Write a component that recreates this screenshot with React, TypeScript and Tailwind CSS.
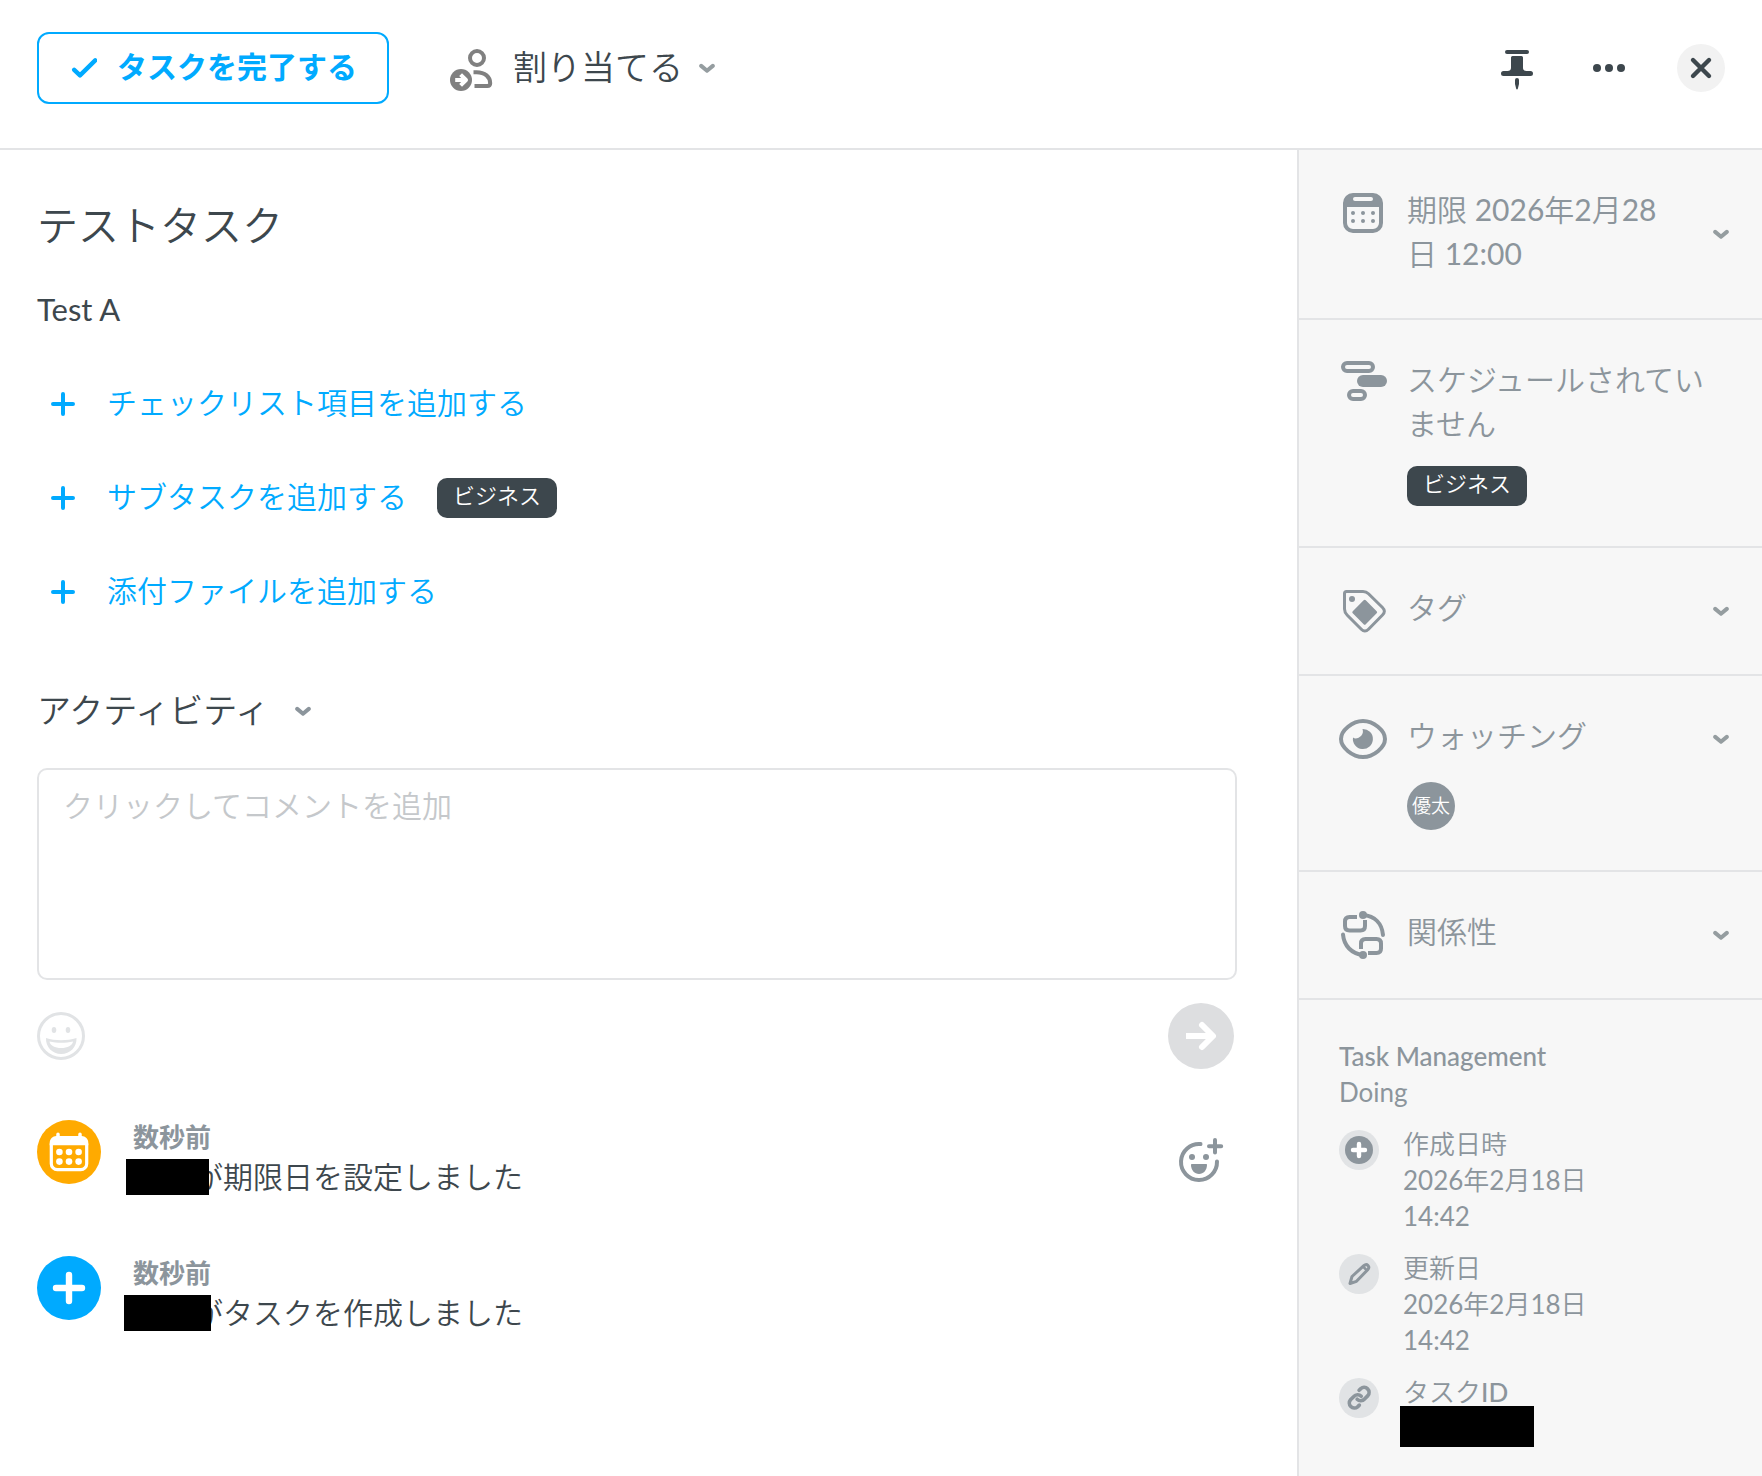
import { useState } from 'react';
import type { ReactNode } from 'react';
import clsx from 'clsx';

interface IconProps {
  className?: string;
}

const ChevronIcon = ({ className }: IconProps) => (
  <svg className={clsx('shrink-0', className)} width="16" height="16" viewBox="0 0 16 16" fill="none" aria-hidden="true">
    <path d="M2.2 5.9L8 10.7L13.8 5.9" stroke="currentColor" strokeWidth="4" strokeLinecap="round" strokeLinejoin="round" />
  </svg>
);

const CheckIcon = () => (
  <svg width="26" height="24" viewBox="0 0 26 24" fill="none" aria-hidden="true">
    <path d="M3.2 13.8L9 19.4L24.2 4.4" stroke="currentColor" strokeWidth="4.4" strokeLinecap="round" strokeLinejoin="round" />
  </svg>
);

const AssignIcon = () => (
  <svg width="48" height="48" viewBox="0 0 48 48" fill="none" aria-hidden="true">
    <circle cx="30" cy="14" r="7" stroke="#808080" strokeWidth="4" />
    <path d="M26.5 28.2H29.5C38 28.2 43.2 33 43.2 39.2C43.2 41.2 42.2 42 40.4 42H27.5" stroke="#808080" strokeWidth="4" />
    <circle cx="14" cy="36" r="11" fill="#808080" />
    <path d="M8.2 36H18M13.6 30.6L19 36L13.6 41.4" stroke="white" strokeWidth="4" strokeLinejoin="round" />
  </svg>
);

const PinIcon = () => (
  <svg width="48" height="48" viewBox="0 0 48 48" fill="currentColor" aria-hidden="true">
    <rect x="12" y="6" width="24" height="4" rx="2" />
    <path d="M19.5 12h9a1.5 1.5 0 0 1 1.5 1.5V24c0 1.8 1.4 3 3.4 3h4.1a2.5 2.5 0 0 1 0 5h-27a2.5 2.5 0 0 1 0-5h4.1c2 0 3.4-1.2 3.4-3V13.5a1.5 1.5 0 0 1 1.5-1.5z" />
    <path d="M22 36a2 2 0 0 1 4 0v4l-1.2 4.8a.83.83 0 0 1-1.6 0L22 40z" />
  </svg>
);

const DotsIcon = () => (
  <svg width="48" height="48" viewBox="0 0 48 48" fill="currentColor" aria-hidden="true">
    <circle cx="12" cy="24" r="4" />
    <circle cx="24" cy="24" r="4" />
    <circle cx="36" cy="24" r="4" />
  </svg>
);

const CloseIcon = () => (
  <svg width="48" height="48" viewBox="0 0 48 48" fill="none" aria-hidden="true">
    <path d="M16 16L32 32M32 16L16 32" stroke="currentColor" strokeWidth="4.4" strokeLinecap="round" />
  </svg>
);

const PlusIcon = () => (
  <svg width="24" height="24" viewBox="0 0 24 24" fill="none" aria-hidden="true">
    <path d="M12 2V22M2 12H22" stroke="currentColor" strokeWidth="4" strokeLinecap="round" />
  </svg>
);

const DueIcon = () => (
  <svg width="48" height="48" viewBox="0 0 48 48" fill="none" aria-hidden="true">
    <rect x="6" y="6" width="36" height="36" rx="8" stroke="currentColor" strokeWidth="4" />
    <path d="M6 18V12C6 8.5 8.5 6 12 6H36C39.5 6 42 8.5 42 12V18Z" fill="currentColor" />
    <rect x="14" y="8" width="20" height="4" rx="2" fill="#f7f7f7" />
    <g fill="currentColor">
      <circle cx="14" cy="24" r="2" />
      <circle cx="24" cy="24" r="2" />
      <circle cx="34" cy="24" r="2" />
      <circle cx="14" cy="32" r="2" />
      <circle cx="24" cy="32" r="2" />
      <circle cx="34" cy="32" r="2" />
    </g>
  </svg>
);

const ScheduleIcon = () => (
  <svg width="48" height="48" viewBox="0 0 48 48" fill="none" aria-hidden="true">
    <rect x="4" y="4" width="30" height="8" rx="4" stroke="currentColor" strokeWidth="4" />
    <rect x="18" y="16" width="30" height="12" rx="6" fill="currentColor" />
    <rect x="10" y="32" width="16" height="8" rx="4" stroke="currentColor" strokeWidth="4" />
  </svg>
);

const TagIcon = () => (
  <svg width="48" height="48" viewBox="0 0 48 48" fill="none" aria-hidden="true">
    <path
      d="M7.5 4.5H24C26.3 4.5 28 5.2 29.5 6.7L43.5 20.5C46 23 46 25.5 43.5 28L29.5 42.2C27 44.7 24.8 44.7 22.3 42.2L8.3 28.2C6.5 26.4 5.5 24.5 5.5 22V6.5C5.5 5.2 6.2 4.5 7.5 4.5Z"
      stroke="currentColor"
      strokeWidth="3"
    />
    <circle cx="13" cy="12" r="3" fill="currentColor" />
    <rect x="16.5" y="16" width="18.4" height="18.4" rx="1.5" transform="rotate(45 25.7 25.2)" fill="currentColor" />
  </svg>
);

const WatchIcon = () => (
  <svg width="48" height="48" viewBox="0 0 48 48" fill="none" aria-hidden="true">
    <path
      d="M24 6C34.5 6 46 15.5 46 24C46 32.5 34.5 42 24 42C13.5 42 2 32.5 2 24C2 15.5 13.5 6 24 6Z"
      stroke="currentColor"
      strokeWidth="4"
    />
    <path d="M23.5 14A10 10 0 1 1 14 22.5C17.5 25.5 26 20.5 23.5 14Z" fill="currentColor" />
  </svg>
);

const RelationIcon = () => (
  <svg width="48" height="48" viewBox="0 0 48 48" fill="none" aria-hidden="true">
    <g stroke="currentColor" strokeWidth="4">
      <path d="M18 6H10.5C7.5 6 6 7.5 6 10.5V15C6 18 7.5 19.5 10.5 19.5H21.5C24.5 19.5 26 18 26 15V9" />
      <path d="M22 38V32.5C22 29.5 23.5 28 26.5 28H37.5C40.5 28 42 29.5 42 32.5V37.5C42 40.5 40.5 42 37.5 42H29" />
      <path d="M24 4C36 5 43 12.5 44 24M4 23.5C5 35 12.5 42.5 24 44" strokeLinecap="round" />
    </g>
    <circle cx="24" cy="4" r="4" fill="currentColor" />
    <circle cx="24" cy="44" r="4" fill="currentColor" />
  </svg>
);

const SmileIcon = () => (
  <svg width="48" height="48" viewBox="0 0 48 48" fill="none" aria-hidden="true">
    <circle cx="24" cy="24" r="22.5" stroke="currentColor" strokeWidth="3" />
    <ellipse cx="17" cy="18" rx="2.3" ry="3" fill="currentColor" />
    <ellipse cx="31" cy="18" rx="2.3" ry="3" fill="currentColor" />
    <path
      fillRule="evenodd"
      d="M9 26C18 29 30 29 39.5 26C40 35 33 42 24.2 42C15.5 42 8.5 35 9 26ZM12.5 29.5C13 33.5 18 36 24.2 36C30.5 36 35.5 33.5 36 29.5C28.5 31.3 20 31.3 12.5 29.5Z"
      fill="currentColor"
    />
  </svg>
);

const SendIcon = () => (
  <svg width="36" height="36" viewBox="0 0 36 36" fill="none" aria-hidden="true">
    <path d="M3 18H29" stroke="white" strokeWidth="6" />
    <path d="M19 7L30 18L19 29" stroke="white" strokeWidth="6" strokeLinecap="round" strokeLinejoin="round" />
  </svg>
);

const ReactionIcon = () => (
  <svg width="48" height="48" viewBox="0 0 48 48" fill="none" aria-hidden="true">
    <path d="M23.5 8A18 18 0 1 0 40 25.5" stroke="currentColor" strokeWidth="4" strokeLinecap="round" />
    <path d="M38 4V16.5M32 10.3H44.2" stroke="currentColor" strokeWidth="4" strokeLinecap="round" />
    <circle cx="15" cy="21" r="3" fill="currentColor" />
    <circle cx="29" cy="21" r="3" fill="currentColor" />
    <path d="M15 28H29C29.8 28 30 28.5 30 29C30 34 26.5 38 22 38C17.5 38 14 34 14 29C14 28.5 14.2 28 15 28Z" fill="currentColor" />
  </svg>
);

const CalendarBadgeIcon = () => (
  <svg width="40" height="40" viewBox="0 0 40 40" fill="none" aria-hidden="true">
    <rect x="2.3" y="6" width="35.4" height="31.7" rx="6" stroke="white" strokeWidth="3.2" />
    <path d="M.7 13.2V11C.7 7 3.5 4 7.5 4H32.5C36.5 4 39.3 7 39.3 11V13.2Z" fill="white" />
    <path d="M9 2.3V7M31 2.3V7" stroke="white" strokeWidth="3.5" strokeLinecap="round" />
    <g fill="white">
      <circle cx="10.4" cy="20" r="3.3" />
      <circle cx="20" cy="20" r="3.3" />
      <circle cx="29.6" cy="20" r="3.3" />
      <circle cx="10.4" cy="29.6" r="3.3" />
      <circle cx="20" cy="29.6" r="3.3" />
      <circle cx="29.6" cy="29.6" r="3.3" />
    </g>
  </svg>
);

const PlusBadgeIcon = () => (
  <svg width="40" height="40" viewBox="0 0 40 40" fill="none" aria-hidden="true">
    <path d="M20 7V33M7 20H33" stroke="white" strokeWidth="6.4" strokeLinecap="round" />
  </svg>
);

const CreatedIcon = () => (
  <svg width="40" height="40" viewBox="0 0 40 40" fill="none" aria-hidden="true">
    <circle cx="20" cy="20" r="14" fill="currentColor" />
    <path d="M20 14V26M14 20H26" stroke="white" strokeWidth="4.4" strokeLinecap="round" />
  </svg>
);

const PencilIcon = () => (
  <svg width="40" height="40" viewBox="0 0 40 40" fill="none" aria-hidden="true">
    <path
      d="M11 29.5L13 22.5L24.8 11.7C26.3 10.4 28 10.4 29 11.5C30.1 12.7 30 14.3 28.7 15.7L17.5 27.3Z"
      stroke="currentColor"
      strokeWidth="3"
      strokeLinejoin="round"
    />
    <path d="M24 12.5L28 16.5" stroke="currentColor" strokeWidth="2.5" />
  </svg>
);

const LinkIcon = () => (
  <svg width="40" height="40" viewBox="0 0 40 40" fill="none" aria-hidden="true">
    <g stroke="currentColor" strokeWidth="3.2" strokeLinecap="round" transform="translate(7.2 6.6) scale(1.14)">
      <path d="M9.6 12.8A4.4 4.4 0 0 0 16.1 12.6L19 9.7A4.4 4.4 0 0 0 12.8 3.5L11.3 5" />
      <path d="M13.2 10.2A4.4 4.4 0 0 0 6.7 10.4L3.8 13.3A4.4 4.4 0 0 0 10 19.5L11.5 18" />
    </g>
  </svg>
);

const addActions = [
  { label: 'チェックリスト項目を追加する' },
  { label: 'サブタスクを追加する', badge: 'ビジネス' },
  { label: '添付ファイルを追加する' },
];

// mask = block that hides the user's name
const activities = [
  {
    time: '数秒前',
    text: 'が期限日を設定しました',
    icon: <CalendarBadgeIcon />,
    color: 'bg-[#ffaa00]',
    mask: '-ml-[7px] -mr-4 w-[83px]',
    reaction: true,
  },
  {
    time: '数秒前',
    text: 'がタスクを作成しました',
    icon: <PlusBadgeIcon />,
    color: 'bg-[#00aaff]',
    mask: '-ml-[9px] -mr-[18px] w-[87px]',
    reaction: false,
  },
];

const details = [
  { label: '作成日時', lines: ['2026年2月18日', '14:42'], icon: <CreatedIcon /> },
  { label: '更新日', lines: ['2026年2月18日', '14:42'], icon: <PencilIcon /> },
];

const Badge = ({ children }: { children: ReactNode }) => (
  <span className="inline-flex h-10 items-center rounded-[10px] bg-[#3d474d] px-4 pb-1 text-[22px] leading-8 font-light text-white">
    {children}
  </span>
);

interface SectionProps {
  icon: ReactNode;
  title: string;
  chevron?: boolean;
  children?: ReactNode;
}

const Section = ({ icon, title, chevron = true, children }: SectionProps) => (
  <section className="border-b-2 border-[#e3e4e6] py-10 pr-[33px] pl-10">
    <button type="button" className="flex min-h-[46px] w-full items-center text-left">
      <span className="-my-px mr-5 shrink-0 self-start">{icon}</span>
      <span className="-mt-[3px] mb-[3px] flex-1 self-start text-[30px] leading-[44px]">{title}</span>
      {chevron && <ChevronIcon className="ml-10 text-[#959da0]" />}
    </button>
    {children && <div className="ml-[68px]">{children}</div>}
  </section>
);

export default function App() {
  const [comment, setComment] = useState('');

  return (
    <div className="flex min-h-screen flex-col bg-white font-[Lato,'Noto_Sans_CJK_JP_DemiLight','Noto_Sans_CJK_JP',sans-serif] text-[#3d474d]">
      {/* Header */}
      <header className="flex items-center border-b-2 border-[#e3e4e6] px-[37px] pt-8 pb-11">
        <button
          type="button"
          className="flex h-[72px] items-center gap-5 rounded-xl border-2 border-[#00aaff] pr-[30px] pl-8 font-[Lato,'Noto_Sans_CJK_JP',sans-serif] text-[30px] font-bold text-[#00aaff]"
        >
          <CheckIcon />
          <span className="pb-1">タスクを完了する</span>
        </button>
        <button type="button" className="ml-[58px] flex items-center text-[34px] font-light">
          <AssignIcon />
          <span className="ml-[18px] pb-1">割り当てる</span>
          <ChevronIcon className="ml-4 text-[#959da0]" />
        </button>
        <div className="ml-auto flex gap-11">
          <button type="button" aria-label="ピン留め"><PinIcon /></button>
          <button type="button" aria-label="その他"><DotsIcon /></button>
          <button type="button" aria-label="閉じる" className="rounded-full bg-[#f2f2f2]"><CloseIcon /></button>
        </div>
      </header>

      <div className="flex flex-1">
        {/* Task body */}
        <main className="flex-1 pt-11 pr-[60px] pl-[37px]">
          <h1 className="text-[41px] leading-[64px] font-light">テストタスク</h1>
          <p className="mt-[27px] text-[31px] leading-[48px]">Test A</p>

          <ul className="mt-6">
            {addActions.map((action) => (
              <li key={action.label} className="flex h-[94px] items-center">
                <button type="button" className="flex items-center gap-8 pl-[14px] text-[30px] font-light text-[#00aaff]">
                  <PlusIcon />
                  <span className="pb-1">{action.label}</span>
                </button>
                {action.badge && (
                  <span className="ml-[30px] flex">
                    <Badge>{action.badge}</Badge>
                  </span>
                )}
              </li>
            ))}
          </ul>

          {/* Activity */}
          <button type="button" className="mt-12 flex h-12 items-center gap-[26px] text-[34px] font-light">
            <span className="pb-1">アクティビティ</span>
            <ChevronIcon className="text-[#8c959c]" />
          </button>
          <textarea
            aria-label="コメント"
            placeholder="クリックしてコメントを追加"
            value={comment}
            onChange={(e) => setComment(e.target.value)}
            className="mt-[33px] block h-[212px] w-full resize-none rounded-[10px] border-2 border-[#e3e4e6] px-6 py-[13px] text-[30px] leading-[44px] font-light outline-none placeholder:text-[#c5c8cb]"
          />
          <div className="mt-[23px] flex items-center justify-between pr-[3px]">
            <button type="button" aria-label="絵文字" className="text-[#e1e3e5]"><SmileIcon /></button>
            <button
              type="button"
              aria-label="送信"
              className="flex h-[66px] w-[66px] items-center justify-center rounded-full bg-[#dddee0]"
            >
              <SendIcon />
            </button>
          </div>

          <ul className="mt-[51px]">
            {activities.map((item) => (
              <li key={item.text} className="flex h-[136px] items-start">
                <span className={clsx('flex h-16 w-16 items-center justify-center rounded-full', item.color)}>{item.icon}</span>
                <div className="-mt-px ml-8">
                  <p className="font-[Lato,'Noto_Sans_CJK_JP',sans-serif] text-[26px] leading-9 font-bold text-[#8c959c]">{item.time}</p>
                  <p className="flex items-start text-[30px] leading-[44px] font-light">
                    <span className={clsx('relative z-10 mt-1 h-9 bg-black', item.mask)} />
                    <span className="-mt-px">{item.text}</span>
                  </p>
                </div>
                {item.reaction && (
                  <button type="button" aria-label="リアクションを追加" className="mt-4 mr-3 ml-auto text-[#8c959c]">
                    <ReactionIcon />
                  </button>
                )}
              </li>
            ))}
          </ul>
        </main>

        {/* Sidebar */}
        <aside className="w-[465px] shrink-0 border-l-2 border-[#e3e4e6] bg-[#f7f7f7] text-[#8c959c]">
          <Section icon={<DueIcon />} title="期限 2026年2月28日 12:00" />
          <Section icon={<ScheduleIcon />} title="スケジュールされていません" chevron={false}>
            <div className="mt-[18px] flex">
              <Badge>ビジネス</Badge>
            </div>
          </Section>
          <Section icon={<TagIcon />} title="タグ" />
          <Section icon={<WatchIcon />} title="ウォッチング">
            <span className="mt-5 flex h-12 w-12 items-center justify-center rounded-full bg-[#8c959c] text-[19px] text-white">
              優太
            </span>
          </Section>
          <Section icon={<RelationIcon />} title="関係性" />

          <div className="px-10 py-[38px] text-[26px] leading-9">
            <p className="font-medium">Task Management</p>
            <p>Doing</p>
            <dl className="mt-4 flex flex-col gap-4">
              {details.map((detail) => (
                <div key={detail.label} className="flex gap-6">
                  <span className="mt-1 h-10 w-10 rounded-full bg-[#e1e3e5]">{detail.icon}</span>
                  <div>
                    <dt>{detail.label}</dt>
                    {detail.lines.map((line) => (
                      <dd key={line}>{line}</dd>
                    ))}
                  </div>
                </div>
              ))}
              <div className="flex gap-6">
                <span className="mt-1 h-10 w-10 rounded-full bg-[#e1e3e5]"><LinkIcon /></span>
                <div>
                  <dt>タスク<span className="font-medium">ID</span></dt>
                  <dd className="-mt-1 -ml-[3px] h-[41px] w-[134px] bg-black" />
                </div>
              </div>
            </dl>
          </div>
        </aside>
      </div>
    </div>
  );
}
